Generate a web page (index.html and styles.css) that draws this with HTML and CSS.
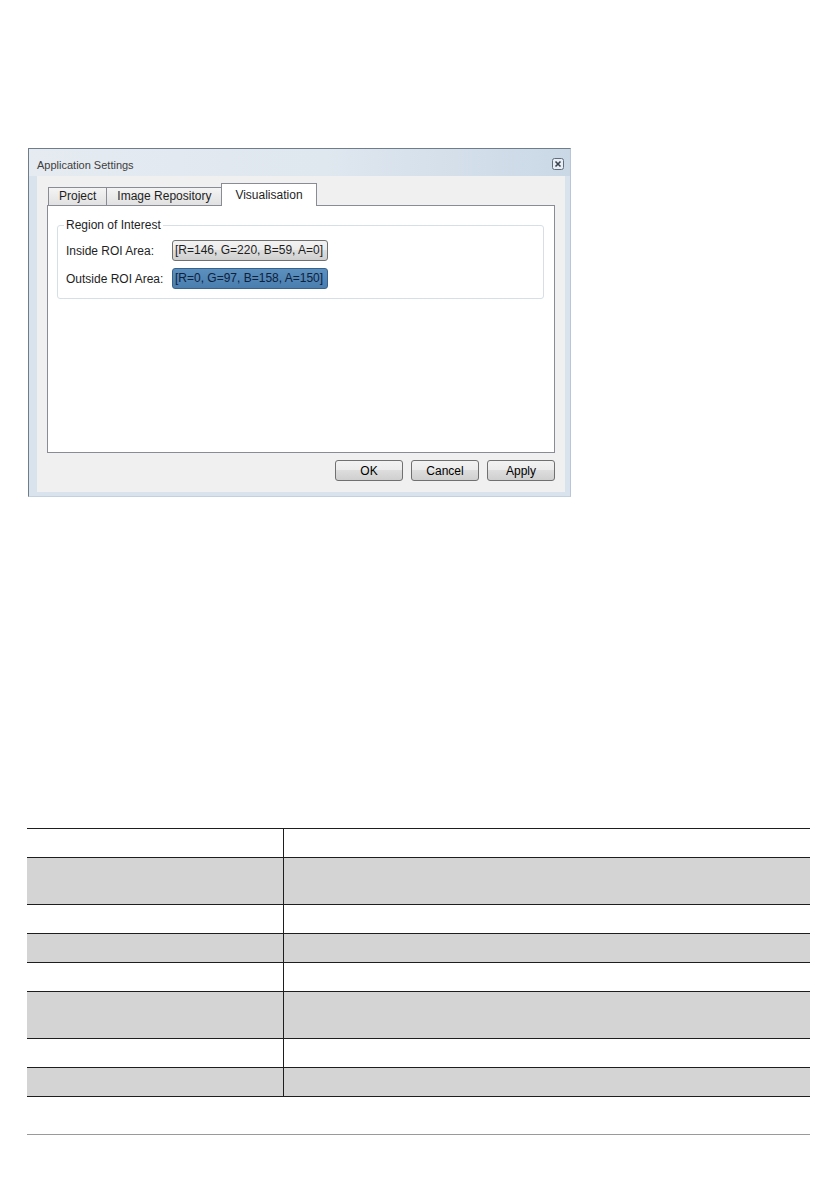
FILE: index.html
```html
<!DOCTYPE html>
<html lang="en">
<head>
  <meta charset="UTF-8">
  <title>Application Settings</title>
  <link rel="stylesheet" href="styles.css">
</head>
<body>
  <div class="page">

    <div class="dialog">
      <div class="titlebar">
        <span class="title">Application Settings</span>
        <span class="close">
          <svg width="12" height="12" viewBox="0 0 12 12">
            <rect x="0.5" y="0.5" width="11" height="11" rx="2" fill="#e8eef4" stroke="#5f6d7b"/>
            <path d="M3.5 3.5 L8.5 8.5 M8.5 3.5 L3.5 8.5" stroke="#3a4450" stroke-width="1.6" fill="none"/>
          </svg>
        </span>
      </div>

      <div class="client">
        <div class="tabs">
          <div class="tab">Project</div>
          <div class="tab">Image Repository</div>
          <div class="tab active">Visualisation</div>
        </div>

        <div class="tabpage">
          <fieldset class="group">
            <legend>Region of Interest</legend>
            <div class="field first">
              <span class="label">Inside ROI Area:</span>
              <span class="swatch inside">[R=146, G=220, B=59, A=0]</span>
            </div>
            <div class="field">
              <span class="label">Outside ROI Area:</span>
              <span class="swatch outside">[R=0, G=97, B=158, A=150]</span>
            </div>
          </fieldset>
        </div>

        <div class="buttons">
          <button class="btn">OK</button>
          <button class="btn">Cancel</button>
          <button class="btn">Apply</button>
        </div>
      </div>
    </div>

    <div class="grid">
      <div class="row"><div></div><div></div></div>
      <div class="row tall shade"><div></div><div></div></div>
      <div class="row"><div></div><div></div></div>
      <div class="row shade"><div></div><div></div></div>
      <div class="row"><div></div><div></div></div>
      <div class="row tall shade"><div></div><div></div></div>
      <div class="row"><div></div><div></div></div>
      <div class="row shade"><div></div><div></div></div>
    </div>

    <div class="footer-rule"></div>

  </div>
</body>
</html>
```

FILE: styles.css
```css
body {
  margin: 0;
  background: #fff;
  font-family: 'Liberation Sans', Arial, sans-serif;
  color: #1e1e1e;
}

.page {
  padding: 148px 0 0 27px;
}

/* dialog window */

.dialog {
  width: 543px;
  height: 349px;
  margin-left: 1px;
  box-sizing: border-box;
  border-top: 1px solid #6f7c89;
  border-left: 1px solid #6f7c89;
  border-right: 1px solid #b7c7d7;
  border-bottom: 1px solid #c3d1df;
  background: #d8e3ee;
  display: flex;
  flex-direction: column;
}

.titlebar {
  height: 27px;
  flex-shrink: 0;
  display: flex;
  justify-content: space-between;
  align-items: flex-start;
  padding: 0 6px 0 8px;
  background: linear-gradient(to right, #e5ebf1 0%, #dfe7ef 55%, #cad8e6 100%);
}

.title {
  margin-top: 10px;
  font-size: 11px;
  line-height: 13px;
  color: #3e3e3e;
}

.close {
  margin-top: 9px;
  display: flex;
}

.client {
  flex: 1;
  margin: 0 5px 4px 8px;
  background: #f0f0f0;
}

/* tabs */

.tabs {
  display: flex;
  align-items: flex-end;
  margin: 7px 0 -1px 11px;
  position: relative;
  z-index: 1;
}

.tab {
  height: 18px;
  margin-bottom: 1px;
  box-sizing: border-box;
  border: 1px solid #898c95;
  border-bottom: 0;
  padding: 0 10px;
  font-size: 12px;
  line-height: 16px;
  background: linear-gradient(#f4f4f4, #e1e1e1);
}

.tab + .tab {
  margin-left: -1px;
}

.tab.active {
  height: 23px;
  margin-bottom: 0;
  padding: 3px 13px 0;
  background: #fff;
}

.tabpage {
  height: 248px;
  margin: 0 10px 0 10px;
  box-sizing: border-box;
  border: 1px solid #898c95;
  background: #fff;
  overflow: hidden;
}

.group {
  margin: 12px 10px 0 9px;
  padding: 0 8px 9px;
  border: 1px solid #d5dfe5;
  border-radius: 3px;
  min-width: 0;
}

.group legend {
  margin-left: -2px;
  padding: 0 2px;
  font-size: 12px;
  line-height: 14px;
}

.field {
  display: flex;
  align-items: center;
  height: 21px;
  margin-top: 7px;
  font-size: 12px;
}

.field.first {
  margin-top: 8px;
}

.label {
  width: 106px;
}

.swatch {
  width: 156px;
  height: 21px;
  box-sizing: border-box;
  border: 1px solid #707070;
  border-radius: 3px;
  padding-left: 2px;
  line-height: 19px;
  white-space: nowrap;
}

.swatch.inside {
  background: linear-gradient(#f2f2f2 0%, #ebebeb 45%, #dddddd 50%, #cfcfcf 100%);
}

.swatch.outside {
  background: linear-gradient(#5c90be, #4a7eaf);
  border-color: #3a6189;
  color: #0e213c;
}

/* buttons */

.buttons {
  display: flex;
  justify-content: flex-end;
  gap: 8px;
  margin: 7px 10px 0 0;
}

.btn {
  width: 68px;
  height: 21px;
  padding: 0;
  border: 1px solid #707070;
  border-radius: 3px;
  background: linear-gradient(#f2f2f2 0%, #ebebeb 49%, #dddddd 50%, #cfcfcf 100%);
  font-family: 'Liberation Sans', Arial, sans-serif;
  font-size: 12px;
  color: #000;
}

/* empty table */

.grid {
  width: 783px;
  margin-top: 331px;
  border-bottom: 1px solid #1e1e1e;
}

.row {
  display: grid;
  grid-template-columns: 257px 1fr;
  height: 28px;
  border-top: 1px solid #1e1e1e;
}

.row.tall {
  height: 46px;
}

.row.shade {
  background: #d4d4d4;
}

.row > div:first-child {
  border-right: 1px solid #1e1e1e;
}

.footer-rule {
  width: 783px;
  margin-top: 37px;
  border-top: 1px solid #9a9a9a;
}
```
